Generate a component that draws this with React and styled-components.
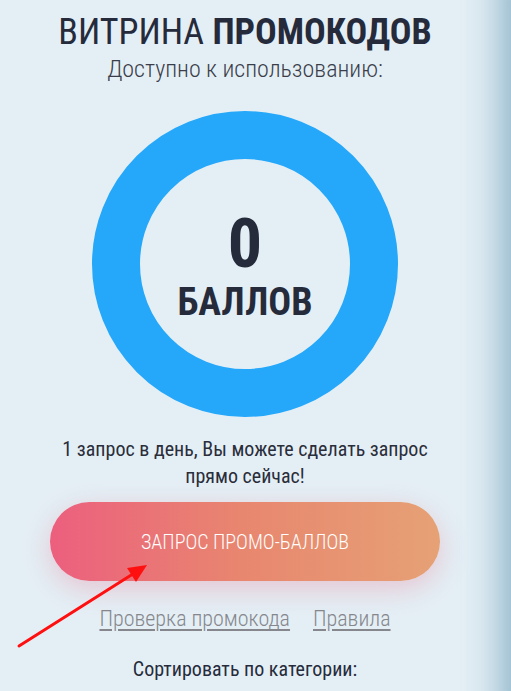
import React from 'react';
import styled, { createGlobalStyle } from 'styled-components';

const GlobalStyle = createGlobalStyle`
    html, body {
        margin: 0;
        padding: 0;
        background-color: #e4eff5;
        overflow: hidden;
    }
    body {
        font-family: "Roboto Condensed", Roboto, "Liberation Sans Narrow", sans-serif;
        font-stretch: condensed;
        color: #262b3c;
    }
`;

const App = () => {
    return (
        <Page>
            <GlobalStyle />
            <Column>
                <Title>ВИТРИНА <b>ПРОМОКОДОВ</b></Title>
                <Subtitle>Доступно к использованию:</Subtitle>
                <Ring>
                    <Points>0</Points>
                    <PointsLabel>БАЛЛОВ</PointsLabel>
                </Ring>
                <Note>1 запрос в день, Вы можете сделать запрос<br />прямо сейчас!</Note>
                <RequestButton>ЗАПРОС ПРОМО-БАЛЛОВ</RequestButton>
                <Links>
                    <a href="#check">Проверка промокода</a>
                    <a href="#rules">Правила</a>
                </Links>
                <SortLabel>Сортировать по категории:</SortLabel>
            </Column>
            <SideShadow />
            <Arrow viewBox="0 0 511 691">
                <line x1="19" y1="646" x2="136" y2="572" stroke="#ff1010" strokeWidth="3" strokeLinecap="round" />
                <polygon points="147,565 127,568 136,582" fill="#ff1010" />
            </Arrow>
        </Page>
    );
}

export default App;

const Page = styled.div`
    position: relative;
    width: 511px;
    height: 691px;
    overflow: hidden;
`

const Column = styled.div`
    width: 490px;
    display: flex;
    flex-direction: column;
    align-items: center;
    padding-top: 12px;
`

const Title = styled.h1`
    margin: 0;
    font-size: 36px;
    font-weight: 400;
    line-height: 40px;
    color: #262b3c;

    b {
        font-weight: 700;
    }
`

const Subtitle = styled.div`
    margin-top: 3px;
    font-size: 24px;
    font-weight: 300;
    line-height: 28px;
    color: #3b3e4a;
`

const Ring = styled.div`
    margin-top: 28px;
    box-sizing: border-box;
    width: 306px;
    height: 306px;
    border-radius: 50%;
    border: 48px solid #25a7fa;
    display: flex;
    flex-direction: column;
    align-items: center;
    justify-content: center;
`

const Points = styled.div`
    font-size: 68px;
    font-weight: 700;
    line-height: 64px;
    margin-top: 6px;
`

const PointsLabel = styled.div`
    font-size: 38px;
    font-weight: 700;
    line-height: 40px;
    margin-top: 6px;
`

const Note = styled.p`
    margin: 19px 0 0;
    text-align: center;
    font-size: 20px;
    line-height: 27px;
    color: #2a2d3a;
`

const RequestButton = styled.button`
    margin-top: 12px;
    width: 390px;
    height: 79px;
    border: none;
    border-radius: 40px;
    background: linear-gradient(90deg, #ec5f7e 0%, #e8876f 50%, #e6a175 100%);
    box-shadow: 0 8px 28px rgba(236, 100, 130, 0.3);
    color: #fff;
    font-family: inherit;
    font-stretch: condensed;
    font-size: 20px;
    font-weight: 300;
    cursor: pointer;
`

const Links = styled.div`
    margin-top: 25px;
    display: flex;
    gap: 23px;

    a {
        color: #86878d;
        font-size: 22px;
        font-weight: 300;
        text-decoration: underline;
        text-underline-offset: 3px;
    }
`

const SortLabel = styled.div`
    margin-top: 26px;
    font-size: 20px;
    color: #262b3c;
`

const SideShadow = styled.div`
    position: absolute;
    top: -40px;
    bottom: -40px;
    right: -40px;
    width: 40px;
    box-shadow: 0 0 40px 6px rgba(90, 145, 175, 0.75);
`

const Arrow = styled.svg`
    position: absolute;
    left: 0;
    top: 0;
    width: 511px;
    height: 691px;
    pointer-events: none;
`
